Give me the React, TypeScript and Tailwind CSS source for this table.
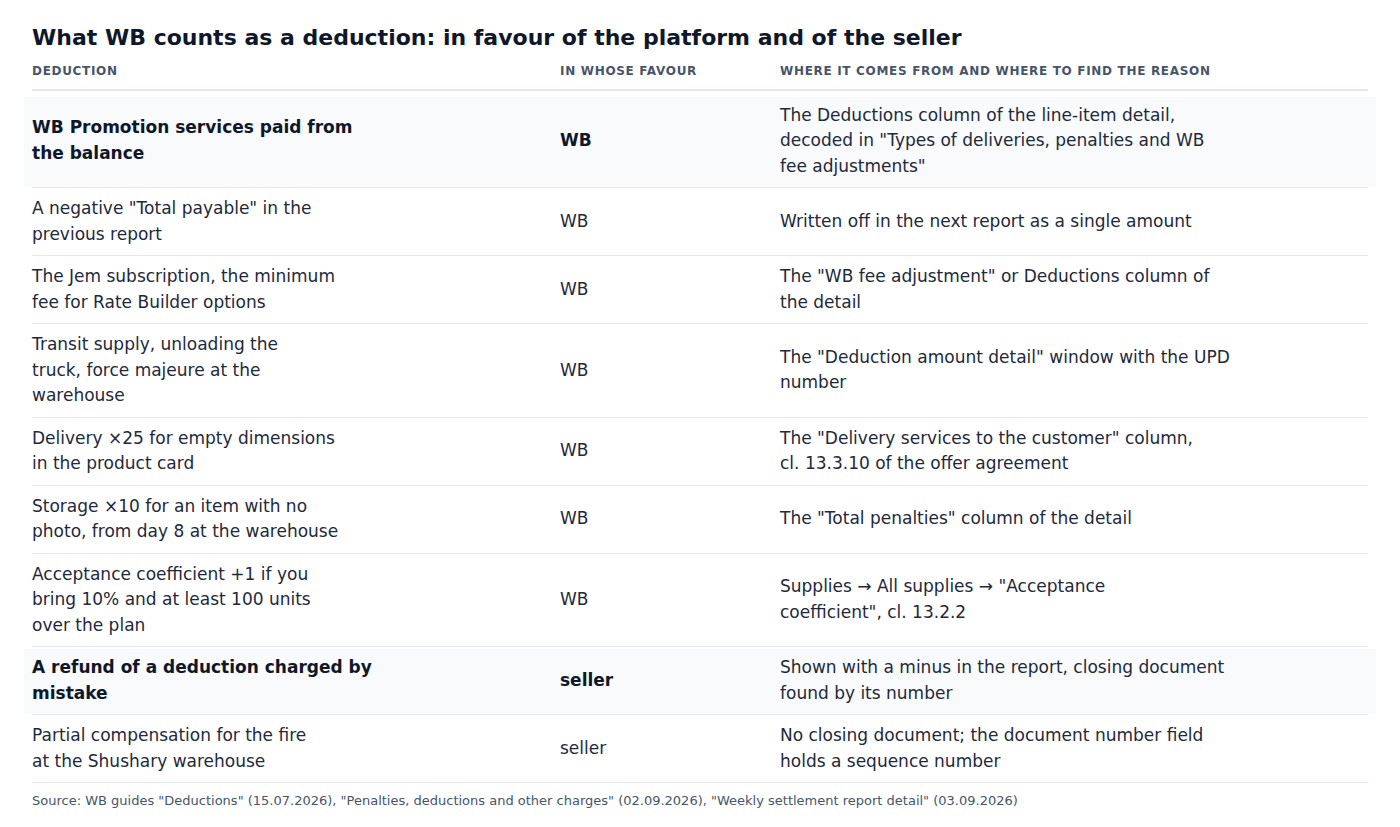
type Row = {
  deduction: string,
  favour: string,
  source: string,
  highlight?: boolean,
}

const rows: Row[] = [
  {
    deduction: 'WB Promotion services paid from the balance',
    favour: 'WB',
    source: 'The Deductions column of the line-item detail, decoded in "Types of deliveries, penalties and WB fee adjustments"',
    highlight: true,
  },
  {
    deduction: 'A negative "Total payable" in the previous report',
    favour: 'WB',
    source: 'Written off in the next report as a single amount',
  },
  {
    deduction: 'The Jem subscription, the minimum fee for Rate Builder options',
    favour: 'WB',
    source: 'The "WB fee adjustment" or Deductions column of the detail',
  },
  {
    deduction: 'Transit supply, unloading the truck, force majeure at the warehouse',
    favour: 'WB',
    source: 'The "Deduction amount detail" window with the UPD number',
  },
  {
    deduction: 'Delivery ×25 for empty dimensions in the product card',
    favour: 'WB',
    source: 'The "Delivery services to the customer" column, cl. 13.3.10 of the offer agreement',
  },
  {
    deduction: 'Storage ×10 for an item with no photo, from day 8 at the warehouse',
    favour: 'WB',
    source: 'The "Total penalties" column of the detail',
  },
  {
    deduction: 'Acceptance coefficient +1 if you bring 10% and at least 100 units over the plan',
    favour: 'WB',
    source: 'Supplies → All supplies → "Acceptance coefficient", cl. 13.2.2',
  },
  {
    deduction: 'A refund of a deduction charged by mistake',
    favour: 'seller',
    source: 'Shown with a minus in the report, closing document found by its number',
    highlight: true,
  },
  {
    deduction: 'Partial compensation for the fire at the Shushary warehouse',
    favour: 'seller',
    source: 'No closing document; the document number field holds a sequence number',
  },
]

// cells are wrapped by character count, like the source table
const wrap = (text: string, max: number) => {
  const lines: string[] = []
  let line = ''
  for (const word of text.split(' ')) {
    const next = line ? line + ' ' + word : word
    if (next.length > max && line) {
      lines.push(line)
      line = word
    } else {
      line = next
    }
  }
  if (line) lines.push(line)
  return lines.map((l, i) => (
    <span key={i} className="block">{l}</span>
  ))
}

const TableRow = ({ deduction, favour, source, highlight }: Row) => (
  <div className="border-b border-[#e2e8f0]">
    <div
      className={
        highlight
          ? '-mx-2 mt-0.5 grid grid-cols-[528px_220px_1fr] items-center bg-[#f8fafc] px-2 pt-1.5 pb-2'
          : 'grid grid-cols-[528px_220px_1fr] items-center py-2'
      }
    >
      <div className={highlight ? 'font-bold text-[#0f172a]' : ''}>{wrap(deduction, 34)}</div>
      <div className={highlight ? 'font-bold text-[#0f172a]' : ''}>{favour}</div>
      <div>{wrap(source, 50)}</div>
    </div>
  </div>
)

export default function App() {
  return (
    <main className="min-h-screen bg-white px-8 pt-6 font-['DejaVu_Sans',sans-serif] text-[#1e293b]">
      <h1 className="text-[22px] font-bold leading-[1.3] text-[#0f172a]">
        What WB counts as a deduction: in favour of the platform and of the seller
      </h1>

      <div className="mt-[9px] mb-[6px] grid grid-cols-[528px_220px_1fr] border-b-2 border-[#e2e8f0] pb-[9px] text-xs font-bold uppercase leading-[1.5] tracking-[0.057em] text-[#475569]">
        <span>Deduction</span>
        <span>In whose favour</span>
        <span>Where it comes from and where to find the reason</span>
      </div>

      <div className="text-[17px] leading-[1.5]">
        {rows.map((row, index) => (
          <TableRow key={index} {...row} />
        ))}
      </div>

      <p className="mt-2 text-[13px] leading-[1.5] text-[#475569]">
        Source: WB guides "Deductions" (15.07.2026), "Penalties, deductions and other charges" (02.09.2026), "Weekly settlement report detail" (03.09.2026)
      </p>
    </main>
  )
}
